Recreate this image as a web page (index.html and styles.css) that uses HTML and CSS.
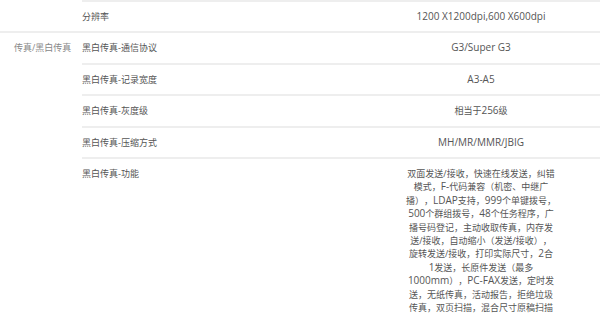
FILE: index.html
```html
<!DOCTYPE html>
<html lang="zh-CN">
<head>
<meta charset="utf-8">
<title>规格参数</title>
<link rel="stylesheet" href="styles.css">
</head>
<body>
<div class="spec">
  <section class="group group-cont">
    <div class="label"></div>
    <div class="rows">
      <div class="row">
        <div class="name">分辨率</div>
        <div class="value"><span class="en">1200 X1200dpi,600 X600dpi</span></div>
      </div>
    </div>
  </section>
  <section class="group">
    <div class="label">传真/黑白传真</div>
    <div class="rows">
      <div class="row">
        <div class="name">黑白传真-通信协议</div>
        <div class="value"><span class="en">G3/Super G3</span></div>
      </div>
      <div class="row">
        <div class="name">黑白传真-记录宽度</div>
        <div class="value"><span class="en">A3-A5</span></div>
      </div>
      <div class="row">
        <div class="name">黑白传真-灰度级</div>
        <div class="value">相当于<span class="en">256</span>级</div>
      </div>
      <div class="row">
        <div class="name">黑白传真-压缩方式</div>
        <div class="value"><span class="en">MH/MR/MMR/JBIG</span></div>
      </div>
      <div class="row row-last">
        <div class="name">黑白传真-功能</div>
        <div class="value value-long">双面发送/接收，快速在线发送，纠错<br>模式，<span class="en">F-</span>代码兼容（机密、中继广<br>播），<span class="en">LDAP</span>支持，<span class="en">999</span>个单键拨号，<br><span class="en">500</span>个群组拨号，<span class="en">48</span>个任务程序，广<br>播号码登记，主动收取传真，内存发<br>送/接收，自动缩小（发送/接收），<br>旋转发送/接收，打印实际尺寸，<span class="en">2</span>合<br><span class="en">1</span>发送，长原件发送（最多<br><span class="en">1000mm</span>），<span class="en">PC-FAX</span>发送，定时发<br>送，无纸传真，活动报告，拒绝垃圾<br>传真，双页扫描，混合尺寸原稿扫描</div>
      </div>
    </div>
  </section>
</div>
</body>
</html>
```

FILE: styles.css
```css
html, body {
  margin: 0;
  padding: 0;
  background: #ffffff;
}

body {
  font-family: "Open Sans", "Noto Sans CJK SC", sans-serif;
  font-size: 9px;
  line-height: 13.4px;
  color: #555555;
  text-spacing-trim: space-all;
}

.spec {
  width: 600px;
}

.group {
  display: grid;
  grid-template-columns: 82px 1fr;
  border-top: 2px solid #eeeeee;
}

.group-cont {
  border-top: none;
}

.label {
  padding: 8px 0 0 14px;
  color: #888888;
}

.rows {
  display: flex;
  flex-direction: column;
}

.row {
  display: grid;
  grid-template-columns: 280px 1fr;
  padding: 8px 0;
  border-top: 2px solid #eeeeee;
}

.group:not(.group-cont) .row:first-child {
  border-top: none;
}

.row-last {
  border-bottom: 2px solid #eeeeee;
}

.name {
  color: #555555;
}

.value {
  text-align: center;
  color: #555555;
}

.value-long {
  white-space: nowrap;
}

.en {
  font-size: 10px;
}
```
